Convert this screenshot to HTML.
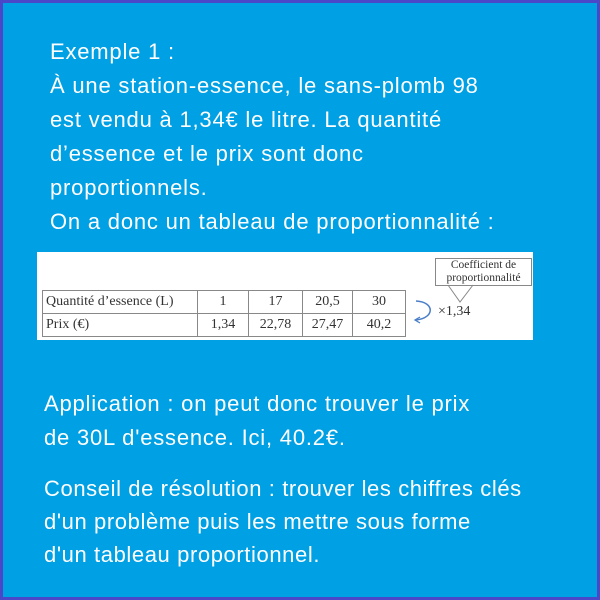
<!DOCTYPE html>
<html><head><meta charset="utf-8"><style>
body{margin:0;width:600px;height:600px;overflow:hidden;font-family:"Liberation Sans",sans-serif}
.f{position:absolute;left:0;top:0;width:594px;height:594px;background:#00a0e4;border:3px solid #4a48c8}
.t{position:absolute;color:#fff;font-size:22px;letter-spacing:0.8px;line-height:34px;white-space:nowrap}
.img{position:absolute;left:34px;top:249px;width:496px;height:88px;background:#fff}
table{position:absolute;left:5px;top:38px;border-collapse:collapse;table-layout:fixed;font-family:"Liberation Serif",serif;font-size:14px;color:#333}
td{border:1px solid #888;height:22px;padding:0 3px;text-align:center}
td:first-child{text-align:left}
</style></head><body><div class="f">
<div class="t" style="left:47px;top:32px">Exemple 1 :<br>À une station-essence, le sans-plomb 98<br>est vendu à 1,34€ le litre. La quantité<br>d’essence et le prix sont donc<br>proportionnels.<br>On a donc un tableau de proportionnalité :</div>
<div class="img">
<table><colgroup><col style="width:155px"><col style="width:51px"><col style="width:54px"><col style="width:50px"><col style="width:53px"></colgroup><tr><td>Quantité d’essence (L)</td><td>1</td><td>17</td><td>20,5</td><td>30</td></tr>
<tr><td>Prix (€)</td><td>1,34</td><td>22,78</td><td>27,47</td><td>40,2</td></tr></table>
<div style="position:absolute;left:398px;top:6px;width:95px;height:26px;border:1px solid #888;font-family:'Liberation Serif',serif;font-size:11.5px;line-height:13px;text-align:center;color:#333">Coefficient de<br>proportionnalité</div>
<svg style="position:absolute;left:0;top:0" width="496" height="88"><path d="M411 33 L423 50 L436 33" stroke="#888" fill="none"/><path d="M379 49 C398 50 398 66 379 68" stroke="#4a7fc8" stroke-width="1.5" fill="none"/><path d="M383 65 L378 68 L383 71" stroke="#4a7fc8" stroke-width="1.3" fill="none"/></svg>
<div style="position:absolute;left:401px;top:52px;font-family:'Liberation Serif',serif;font-size:14px;color:#333">×1,34</div>
</div>
<div class="t" style="left:41px;top:384px">Application : on peut donc trouver le prix<br>de 30L d'essence. Ici, 40.2€.</div>
<div class="t" style="left:41px;top:469px;line-height:33px;letter-spacing:0.6px">Conseil de résolution : trouver les chiffres clés<br>d'un problème puis les mettre sous forme<br>d'un tableau proportionnel.</div>
</div></body></html>
